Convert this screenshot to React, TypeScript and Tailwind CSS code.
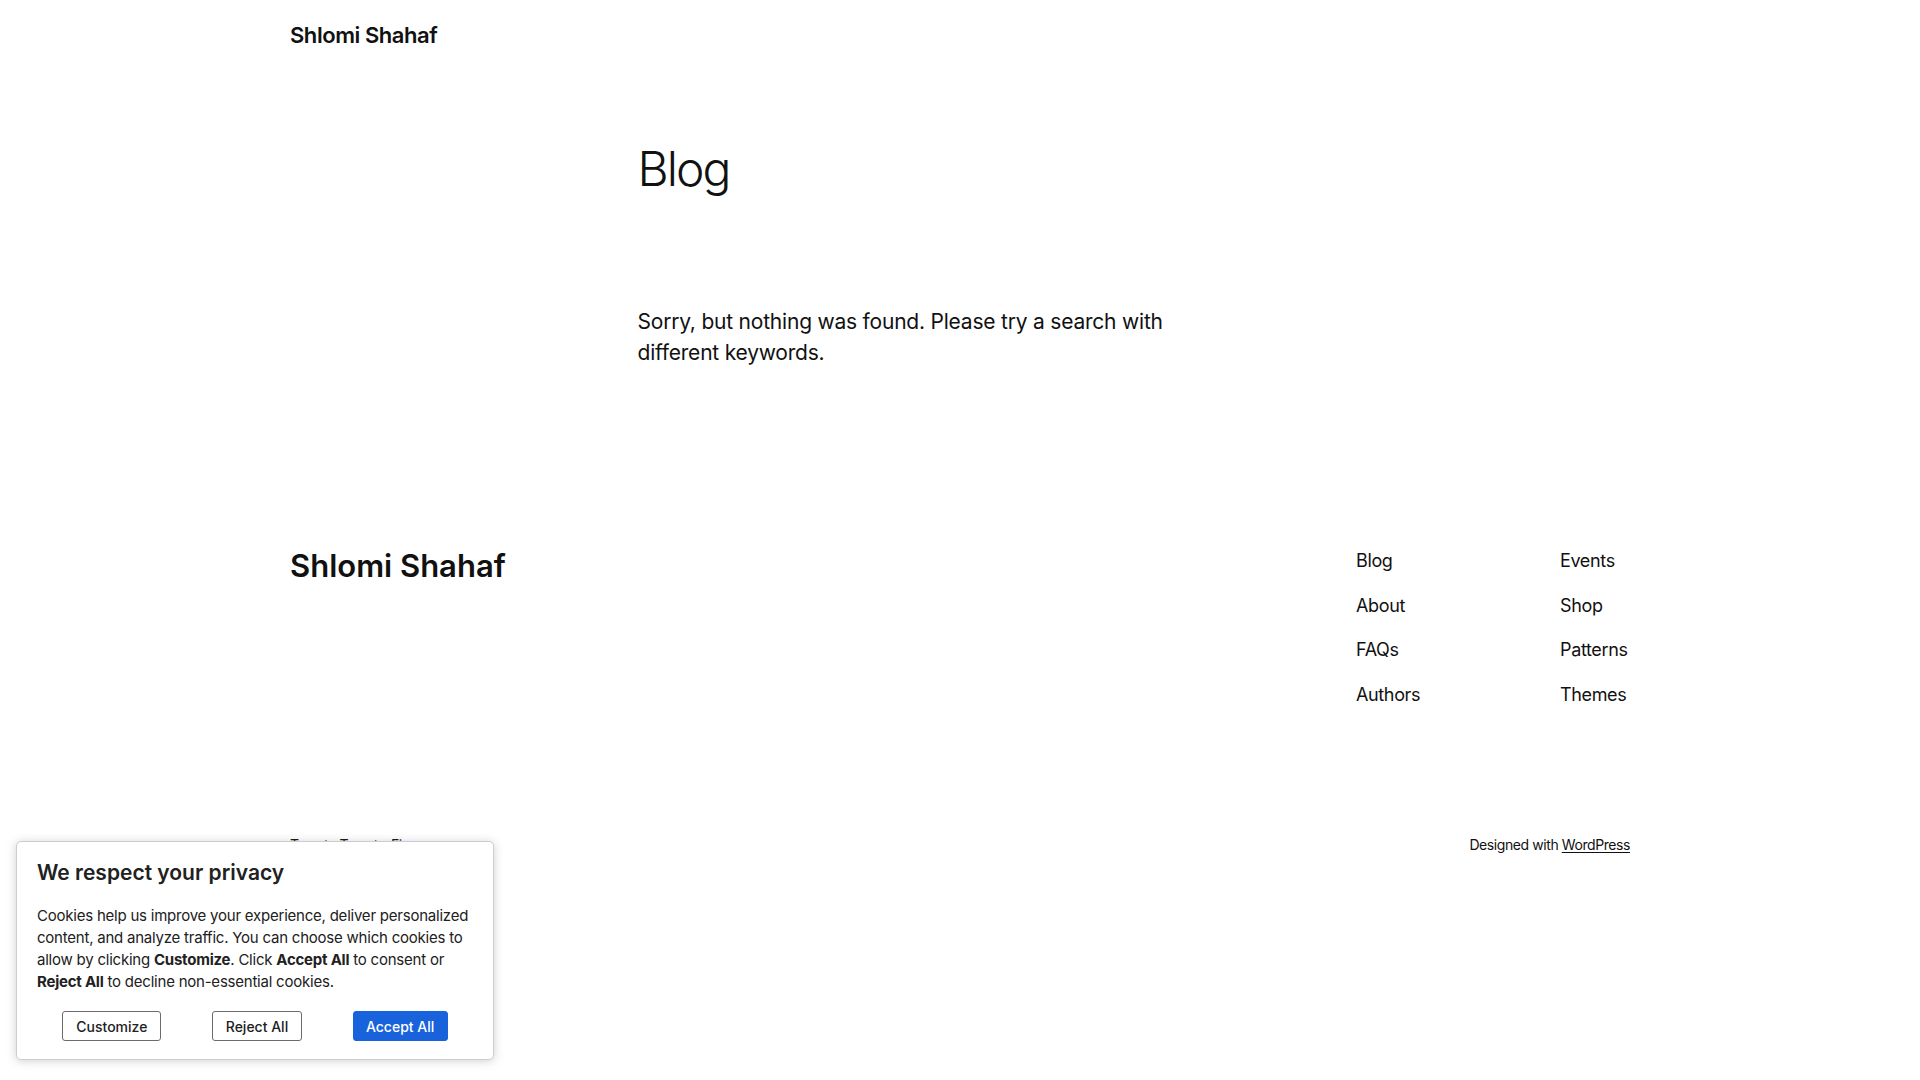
import React from "react";

const navCol1 = ["Blog", "About", "FAQs", "Authors"];
const navCol2 = ["Events", "Shop", "Patterns", "Themes"];

export default function App() {
  return (
    <div
      className="relative min-h-[1080px] w-full bg-white text-[#111111]"
      style={{ fontFamily: "Inter, 'Noto Sans', sans-serif" }}
    >
      <header className="mx-auto w-[1340px] pt-[21px]">
        <div className="text-[22px] leading-[28px] font-semibold tracking-[-0.02em]">Shlomi Shahaf</div>
      </header>

      <main className="mx-auto w-[645px] pt-[91px]">
        <h1 className="text-[48px] leading-[58px] font-light tracking-[-0.04em]">Blog</h1>
        <p className="mt-[108px] max-w-[560px] text-[21px] leading-[31px] font-normal tracking-[-0.01em]">
          Sorry, but nothing was found. Please try a search with different keywords.
        </p>
      </main>

      <footer className="mx-auto w-[1340px] pt-[179px]">
        <div className="flex items-start justify-between">
          <div className="text-[31px] leading-[37px] font-semibold">Shlomi Shahaf</div>
          <div className="flex w-[274px] text-[18px] leading-[28px] tracking-[-0.02em]">
            <div className="flex w-[204px] flex-col gap-[16.5px]">
              {navCol1.map((n) => (
                <a key={n} className="block">{n}</a>
              ))}
            </div>
            <div className="flex flex-1 flex-col gap-[16.5px]">
              {navCol2.map((n) => (
                <a key={n} className="block">{n}</a>
              ))}
            </div>
          </div>
        </div>
        <div className="mt-[125px] flex items-start justify-between text-[14px] leading-[21px] tracking-[-0.03em]">
          <p>Twenty Twenty-Five</p>
          <p>
            Designed with <a className="underline underline-offset-2">WordPress</a>
          </p>
        </div>
      </footer>

      <div className="absolute left-[16px] top-[841px] w-[478px] rounded-[5px] border border-[#c9ced6] bg-white px-[20px] pt-[17px] pb-[18px] text-[#212121] shadow-[0_1px_10px_0_rgba(120,120,120,0.35)]">
        <div className="text-[21px] leading-[27px] font-semibold">We respect your privacy</div>
        <p className="mt-[19px] -mr-[10px] text-[15px] leading-[22px] tracking-[-0.015em]">
          Cookies help us improve your experience, deliver personalized content, and analyze traffic. You can choose which cookies to allow by clicking <b className="font-bold">Customize</b>. Click <b className="font-bold">Accept All</b> to consent or <b className="font-bold">Reject All</b> to decline non-essential cookies.
        </p>
        <div className="mt-[18px] flex justify-around">
          <button className="h-[30px] w-[99px] rounded-[3px] border border-[#6b6b6b] bg-white text-[14px] font-medium text-[#212121]">Customize</button>
          <button className="h-[30px] w-[90px] rounded-[3px] border border-[#6b6b6b] bg-white text-[14px] font-medium text-[#212121]">Reject All</button>
          <button className="h-[30px] w-[95px] rounded-[3px] border border-[#1863dc] bg-[#1863dc] text-[14px] font-medium text-white">Accept All</button>
        </div>
      </div>
    </div>
  );
}
